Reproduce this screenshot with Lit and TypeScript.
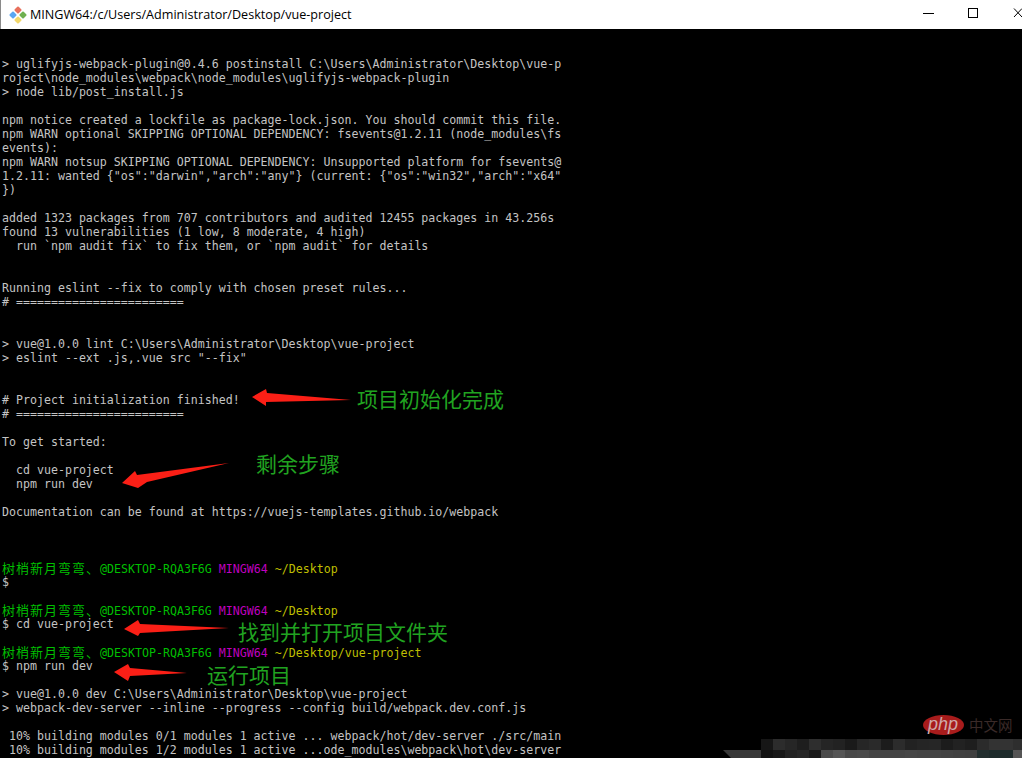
import { LitElement, html, css, svg } from "lit";
import { customElement } from "lit/decorators.js";

type Seg = [string, string?];
const prompt = (path: string): Seg[] => [
  ["树梢新月弯弯、", "g cjk"],
  ["@DESKTOP-RQA3F6G ", "g"],
  ["MINGW64 ", "m"],
  [path, "y"],
];
const LINES: (string | Seg[])[] = [
  "",
  "",
  "> uglifyjs-webpack-plugin@0.4.6 postinstall C:\\Users\\Administrator\\Desktop\\vue-p",
  "roject\\node_modules\\webpack\\node_modules\\uglifyjs-webpack-plugin",
  "> node lib/post_install.js",
  "",
  "npm notice created a lockfile as package-lock.json. You should commit this file.",
  "npm WARN optional SKIPPING OPTIONAL DEPENDENCY: fsevents@1.2.11 (node_modules\\fs",
  "events):",
  "npm WARN notsup SKIPPING OPTIONAL DEPENDENCY: Unsupported platform for fsevents@",
  '1.2.11: wanted {"os":"darwin","arch":"any"} (current: {"os":"win32","arch":"x64"',
  "})",
  "",
  "added 1323 packages from 707 contributors and audited 12455 packages in 43.256s",
  "found 13 vulnerabilities (1 low, 8 moderate, 4 high)",
  "  run `npm audit fix` to fix them, or `npm audit` for details",
  "",
  "",
  "Running eslint --fix to comply with chosen preset rules...",
  "# ========================",
  "",
  "",
  "> vue@1.0.0 lint C:\\Users\\Administrator\\Desktop\\vue-project",
  '> eslint --ext .js,.vue src "--fix"',
  "",
  "",
  "# Project initialization finished!",
  "# ========================",
  "",
  "To get started:",
  "",
  "  cd vue-project",
  "  npm run dev",
  "",
  "Documentation can be found at https://vuejs-templates.github.io/webpack",
  "",
  "",
  "",
  prompt("~/Desktop"),
  "$",
  "",
  prompt("~/Desktop"),
  "$ cd vue-project",
  "",
  prompt("~/Desktop/vue-project"),
  "$ npm run dev",
  "",
  "> vue@1.0.0 dev C:\\Users\\Administrator\\Desktop\\vue-project",
  "> webpack-dev-server --inline --progress --config build/webpack.dev.conf.js",
  "",
  " 10% building modules 0/1 modules 1 active ... webpack/hot/dev-server ./src/main",
  " 10% building modules 1/2 modules 1 active ...ode_modules\\webpack\\hot\\dev-server",
];

const ARROWS = [
  "252,397 266,389 267,393 351,400 266,402 266,406",
  "122,483 135,471 137,475 229,463 147,482 138,488",
  "124,629 138,620 140,624 229,628 140,633 138,636",
  "114,672 128,664 130,668 187,673 130,676 128,681",
];

const NOTES = [
  { text: "项目初始化完成", x: 357, y: 388 },
  { text: "剩余步骤", x: 256, y: 453 },
  { text: "找到并打开项目文件夹", x: 238, y: 621 },
  { text: "运行项目", x: 207, y: 664 },
];

const ROW1 = ["#161616","#2c2c2c","#262626","#1e1e1e","#2e2e2e","#252525","#222222","#1a1a1a","#262626","#2a2a2a","#1c1c1c","#2c2c2c","#222222","#252525","#262626","#1c1c1c","#222222","#1e1e1e","#2b2b2b","#333333","#333333","#2e2e2e"];
const ROW2 = ["#121212","#181818","#222222","#262626","#1a1a1a","#4a4a4a","#555555","#484848","#4a4a4a","#444444","#444444","#444444","#464646","#444444","#444444","#424242","#404040","#3f3f3f","#222e2e","#1e2b2b","#1e2b2b","#555555"];

@customElement("app-root")
export class AppRoot extends LitElement {
  static styles = css`
    :host {
      display: block;
      position: relative;
      width: 1022px;
      height: 758px;
      overflow: hidden;
      background: #000;
    }
    .titlebar {
      display: flex;
      align-items: center;
      height: 29px;
      background: #fff;
      border-left: 1px solid #8a8a8a;
      box-sizing: border-box;
      padding-left: 8px;
    }
    .title {
      margin-left: 3px;
      font: 12.6px "Open Sans", "Noto Sans", sans-serif;
      color: #000;
      white-space: nowrap;
      flex: 1;
    }
    .controls {
      display: flex;
      align-items: center;
      height: 100%;
    }
    .term {
      padding-left: 2px;
      font-family: "DejaVu Sans Mono", "Noto Sans CJK SC", monospace;
      font-size: 11.62px;
      color: #c4c4c4;
    }
    .line {
      height: 14px;
      line-height: 14px;
      white-space: pre;
    }
    .cjk {
      font-family: "Noto Sans CJK SC", sans-serif;
      font-size: 13px;
      letter-spacing: 1px;
    }
    .g { color: #00bf00; }
    .m { color: #bf00bf; }
    .y { color: #bfbf00; }
    .overlay {
      position: absolute;
      left: 0;
      top: 0;
    }
    .note {
      position: absolute;
      font: 400 21px/21px "Noto Sans CJK SC", sans-serif;
      color: #20a320;
      white-space: nowrap;
    }
    .mosaic {
      position: absolute;
      left: 761px;
      top: 739px;
      display: grid;
      grid-template-columns: repeat(22, 12px);
      grid-template-rows: 11px 9px;
      filter: blur(0.6px);
    }
    .wm-text {
      position: absolute;
      left: 969px;
      top: 717px;
      font: 14.5px/16px "Noto Sans CJK SC", sans-serif;
      color: #3a2a28;
      white-space: nowrap;
    }
    .php {
      position: absolute;
      left: 928px;
      top: 714px;
      font: italic 18px/20px "Liberation Sans", sans-serif;
      color: #cfa9a9;
    }
  `;

  private renderLine(l: string | Seg[]) {
    if (typeof l === "string") return html`<div class="line">${l}</div>`;
    return html`<div class="line">${l.map(([t, c]) => html`<span class=${c ?? ""}>${t}</span>`)}</div>`;
  }

  private gitIcon() {
    return html`<svg width="18" height="18" viewBox="0 0 18 18">
      <rect x="6.2" y="1.2" width="5.6" height="5.6" rx="1" fill="#e8705c" transform="rotate(45 9 4)"/>
      <rect x="1.2" y="6.2" width="5.6" height="5.6" rx="1" fill="#5aa5f2" transform="rotate(45 4 9)"/>
      <rect x="11.2" y="6.2" width="5.6" height="5.6" rx="1" fill="#6fb04f" transform="rotate(45 14 9)"/>
      <rect x="6.2" y="11.2" width="5.6" height="5.6" rx="1" fill="#f2d76a" transform="rotate(45 9 14)"/>
    </svg>`;
  }

  render() {
    return html`
      <div class="titlebar">
        ${this.gitIcon()}
        <span class="title">MINGW64:/c/Users/Administrator/Desktop/vue-project</span>
        <div class="controls">
          <svg width="112" height="29" viewBox="910 0 112 29" fill="none" stroke="#000" stroke-width="1" shape-rendering="crispEdges">
            <path d="M923 13.5H934"/>
            <rect x="968.5" y="8.5" width="9" height="9"/>
            <path d="M1014 8.5L1022 17M1022 8.5L1014 17" shape-rendering="auto"/>
          </svg>
        </div>
      </div>
      <div class="term">${LINES.map((l) => this.renderLine(l))}</div>
      <svg class="overlay" width="1022" height="758" viewBox="0 0 1022 758">
        ${ARROWS.map((p) => svg`<polygon points=${p} fill="#fb1f16"/>`)}
        <ellipse cx="943.5" cy="725" rx="20.5" ry="10" fill="#a81c1c"/>
        <polygon points="723,750 761,750 761,758 731,758" fill="#383838"/>
      </svg>
      ${NOTES.map(
        (n) => html`<div class="note" style="left:${n.x}px;top:${n.y}px">${n.text}</div>`
      )}
      <div class="php">php</div>
      <div class="wm-text">中文网</div>
      <div class="mosaic">
        ${[...ROW1, ...ROW2].map((c) => html`<div style="background:${c}"></div>`)}
      </div>
    `;
  }
}
